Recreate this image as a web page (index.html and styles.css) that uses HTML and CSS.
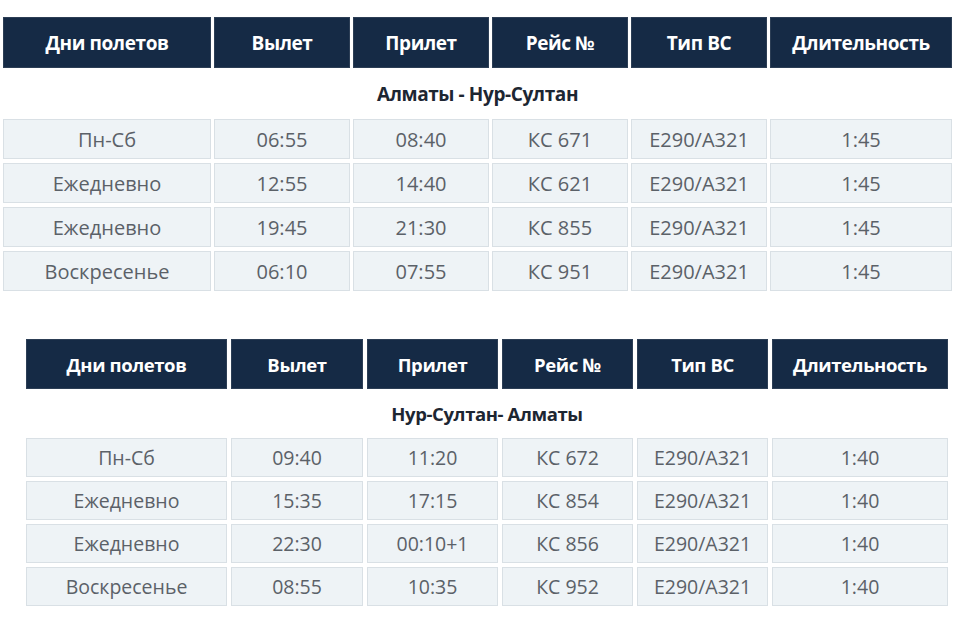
FILE: index.html
```html
<!DOCTYPE html>
<html lang="ru">
<head>
<meta charset="utf-8">
<title>Расписание</title>
<link rel="stylesheet" href="styles.css">
</head>
<body>
<section class="schedule s1">
  <div class="row head">
    <div class="cell">Дни полетов</div><div class="cell">Вылет</div><div class="cell">Прилет</div><div class="cell">Рейс №</div><div class="cell">Тип ВС</div><div class="cell">Длительность</div>
  </div>
  <div class="route">Алматы - Нур-Султан</div>
  <div class="row data">
    <div class="cell">Пн-Сб</div><div class="cell">06:55</div><div class="cell">08:40</div><div class="cell">КС 671</div><div class="cell">E290/A321</div><div class="cell">1:45</div>
  </div>
  <div class="row data">
    <div class="cell">Ежедневно</div><div class="cell">12:55</div><div class="cell">14:40</div><div class="cell">КС 621</div><div class="cell">E290/A321</div><div class="cell">1:45</div>
  </div>
  <div class="row data">
    <div class="cell">Ежедневно</div><div class="cell">19:45</div><div class="cell">21:30</div><div class="cell">КС 855</div><div class="cell">E290/A321</div><div class="cell">1:45</div>
  </div>
  <div class="row data">
    <div class="cell">Воскресенье</div><div class="cell">06:10</div><div class="cell">07:55</div><div class="cell">КС 951</div><div class="cell">E290/A321</div><div class="cell">1:45</div>
  </div>
</section>
<section class="schedule s2">
  <div class="row head">
    <div class="cell">Дни полетов</div><div class="cell">Вылет</div><div class="cell">Прилет</div><div class="cell">Рейс №</div><div class="cell">Тип ВС</div><div class="cell">Длительность</div>
  </div>
  <div class="route">Нур-Султан- Алматы</div>
  <div class="row data">
    <div class="cell">Пн-Сб</div><div class="cell">09:40</div><div class="cell">11:20</div><div class="cell">КС 672</div><div class="cell">E290/A321</div><div class="cell">1:40</div>
  </div>
  <div class="row data">
    <div class="cell">Ежедневно</div><div class="cell">15:35</div><div class="cell">17:15</div><div class="cell">КС 854</div><div class="cell">E290/A321</div><div class="cell">1:40</div>
  </div>
  <div class="row data">
    <div class="cell">Ежедневно</div><div class="cell">22:30</div><div class="cell">00:10+1</div><div class="cell">КС 856</div><div class="cell">E290/A321</div><div class="cell">1:40</div>
  </div>
  <div class="row data">
    <div class="cell">Воскресенье</div><div class="cell">08:55</div><div class="cell">10:35</div><div class="cell">КС 952</div><div class="cell">E290/A321</div><div class="cell">1:40</div>
  </div>
</section>
</body>
</html>
```
FILE: styles.css
```css
html, body {
  margin: 0;
  padding: 0;
  background: #ffffff;
}
body {
  font-family: "Open Sans", "Noto Sans", sans-serif;
}
.schedule {
  display: flex;
  flex-direction: column;
}
.s1 {
  width: 949px;
  margin: 17px 0 0 3px;
  row-gap: 4px;
}
.s2 {
  width: 922px;
  margin: 48px 0 0 26px;
  row-gap: 4px;
}
.row {
  display: grid;
}
.s1 .row {
  grid-template-columns: 208px 136px 136px 136px 136px 182px;
  column-gap: 3px;
}
.s2 .row {
  grid-template-columns: 201px 132px 131px 131px 131px 176px;
  column-gap: 4px;
}
.cell {
  display: flex;
  align-items: center;
  justify-content: center;
  box-sizing: border-box;
  white-space: nowrap;
}
.head .cell {
  background: #152a45;
  color: #ffffff;
  font-weight: 700;
  letter-spacing: -0.4px;
  border: 1px solid #2c3e55;
}
.s1 .head .cell { height: 51px; font-size: 19px; }
.s2 .head .cell { height: 50px; font-size: 18.5px; }
.data .cell {
  background: #eef3f6;
  border: 1px solid #d9e0e5;
  color: #5b6168;
}
.s1 .data .cell { height: 40px; font-size: 20px; }
.s2 .data .cell { height: 39px; font-size: 19.5px; }
.route {
  display: flex;
  align-items: center;
  justify-content: center;
  font-weight: 700;
  color: #1d2632;
  letter-spacing: -0.4px;
}
.s1 .route { height: 43px; font-size: 19px; }
.s2 .route { height: 41px; font-size: 18.5px; }
```
